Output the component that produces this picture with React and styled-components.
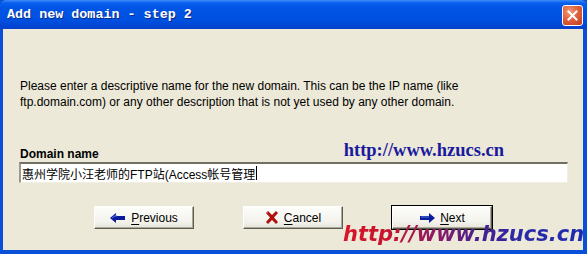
import styled, { createGlobalStyle } from "styled-components";

const GlobalStyle = createGlobalStyle`
  html, body {
    margin: 0;
    padding: 0;
    background: #ece9d8;
  }
`;

const Window = styled.div`
  width: 587px;
  height: 254px;
  display: flex;
  flex-direction: column;
  background: #0a4fd8;
  position: relative;
  overflow: hidden;
  font-family: "Liberation Sans", Arial, sans-serif;
`;

const TitleBar = styled.div`
  height: 29px;
  flex: none;
  display: flex;
  align-items: center;
  justify-content: space-between;
  padding: 0 4px 0 7px;
  box-sizing: border-box;
  border-radius: 6px 6px 0 0;
  background: linear-gradient(
    to bottom,
    #3d8cf7 0px,
    #0a5ff0 3px,
    #0055e5 8px,
    #0050e0 20px,
    #0046d4 26px,
    #0a3fc8 29px
  );
`;

const Title = styled.span`
  color: #fff;
  font-family: "Liberation Mono", "Courier New", monospace;
  font-weight: bold;
  font-size: 13.4px;
  text-shadow: 1px 1px 0 #0a2a8a;
`;

const CloseButton = styled.div`
  width: 19px;
  height: 19px;
  border: 1px solid #fff;
  border-radius: 3px;
  background: radial-gradient(circle at 35% 30%, #f09a78 0%, #e0623e 45%, #c23a1c 100%);
  display: flex;
  align-items: center;
  justify-content: center;
  margin-top: 2px;
`;

const Body = styled.div`
  flex: 1;
  margin: 0 4px 4px 3px;
  background: #ece9d8;
  padding: 49px 16px 0 17px;
  display: flex;
  flex-direction: column;
`;

const Paragraph = styled.p`
  margin: 0;
  font-size: 12px;
  line-height: 16px;
  color: #000;
`;

const FieldHead = styled.div`
  margin-top: 33px;
  display: flex;
  align-items: flex-end;
  height: 19px;
`;

const Label = styled.span`
  font-weight: bold;
  font-size: 12px;
  line-height: 14px;
  margin-bottom: 1px;
`;

const SiteLink = styled.span`
  margin-left: 245px;
  font-family: "Liberation Serif", "Times New Roman", serif;
  font-weight: bold;
  font-size: 18.5px;
  line-height: 18px;
  color: #1a1a9e;
  margin-bottom: 3px;
`;

const TextBox = styled.div`
  width: 549px;
  height: 21px;
  box-sizing: border-box;
  margin-left: -1px;
  background: #fff;
  border-top: 2px solid #716f64;
  border-left: 2px solid #9c9a8e;
  border-right: 1px solid #f1efe2;
  border-bottom: 1px solid #f1efe2;
  display: flex;
  align-items: center;
  padding-left: 1px;
  font-family: "Liberation Sans", "Noto Sans CJK SC", sans-serif;
  font-size: 12px;
  color: #000;
`;

const Caret = styled.span`
  display: inline-block;
  width: 1px;
  height: 14px;
  background: #000;
  margin-left: 1px;
`;

const ButtonRow = styled.div`
  margin-top: 23px;
  display: flex;
  gap: 49px;
  padding-left: 74px;
`;

const Button = styled.div`
  width: 100px;
  height: 23px;
  box-sizing: border-box;
  background: linear-gradient(to bottom, #fdfdfb, #f3f2ec 70%, #e6e4d9);
  border: 1px solid;
  border-color: #ffffff #5e5c52 #5e5c52 #ffffff;
  box-shadow: inset -1px -1px 0 #aca899;
  outline: ${(p) => (p.$default ? "1px solid #000" : "none")};
  display: flex;
  align-items: center;
  justify-content: center;
  gap: 5px;
  font-size: 12px;
  color: #000;

  u {
    text-decoration: underline;
    text-underline-offset: 2px;
  }
`;

const Watermark = styled.div`
  position: absolute;
  left: 343px;
  top: 221px;
  font-family: "DejaVu Sans", Verdana, sans-serif;
  font-weight: bold;
  font-style: italic;
  font-size: 21px;
  line-height: 27px;
  letter-spacing: 0;
  background: linear-gradient(to right, #d8142a 0%, #c8142e 18%, #8a1a6a 40%, #4a1f8c 55%, #2a2aa8 75%, #1e2ab0 100%);
  -webkit-background-clip: text;
  background-clip: text;
  color: transparent;
`;

const ArrowLeft = () => (
  <svg width="16" height="10" viewBox="0 0 16 10">
    <path d="M0 5 L6 0 L6 3 L15 3 L15 7 L6 7 L6 10 Z" fill="#0a1a9c" />
    <path d="M2 5 L6 2 L6 4" stroke="#5a78e0" strokeWidth="1" fill="none" />
  </svg>
);

const ArrowRight = () => (
  <svg width="16" height="10" viewBox="0 0 16 10">
    <path d="M16 5 L10 0 L10 3 L1 3 L1 7 L10 7 L10 10 Z" fill="#0a1a9c" />
    <path d="M2 4 L10 4" stroke="#5a78e0" strokeWidth="1" />
  </svg>
);

const CrossIcon = () => (
  <svg width="14" height="13" viewBox="0 0 14 13">
    <path
      d="M1 2 L3 0 L7 4 L11 0 L13 2 L9 6.5 L13 11 L11 13 L7 9 L3 13 L1 11 L5 6.5 Z"
      fill="#b01010"
    />
    <path d="M2 2 L3 1" stroke="#e06060" strokeWidth="1" />
  </svg>
);

const App = () => {
  return (
    <Window>
      <GlobalStyle />
      <TitleBar>
        <Title>Add new domain - step 2</Title>
        <CloseButton>
          <svg width="11" height="11" viewBox="0 0 11 11">
            <path d="M1.5 1.5 L9.5 9.5 M9.5 1.5 L1.5 9.5" stroke="#fff" strokeWidth="2" strokeLinecap="square" />
          </svg>
        </CloseButton>
      </TitleBar>
      <Body>
        <Paragraph>
          Please enter a descriptive name for the new domain. This can be the IP name (like
          <br />
          ftp.domain.com) or any other description that is not yet used by any other domain.
        </Paragraph>
        <FieldHead>
          <Label>Domain name</Label>
          <SiteLink>http://www.hzucs.cn</SiteLink>
        </FieldHead>
        <TextBox>
          惠州学院小汪老师的FTP站(Access帐号管理
          <Caret />
        </TextBox>
        <ButtonRow>
          <Button>
            <ArrowLeft />
            <span>
              <u>P</u>revious
            </span>
          </Button>
          <Button>
            <CrossIcon />
            <span>
              <u>C</u>ancel
            </span>
          </Button>
          <Button $default>
            <ArrowRight />
            <span>
              <u>N</u>ext
            </span>
          </Button>
        </ButtonRow>
      </Body>
      <Watermark>http://www.hzucs.cn</Watermark>
    </Window>
  );
};

export default App;
